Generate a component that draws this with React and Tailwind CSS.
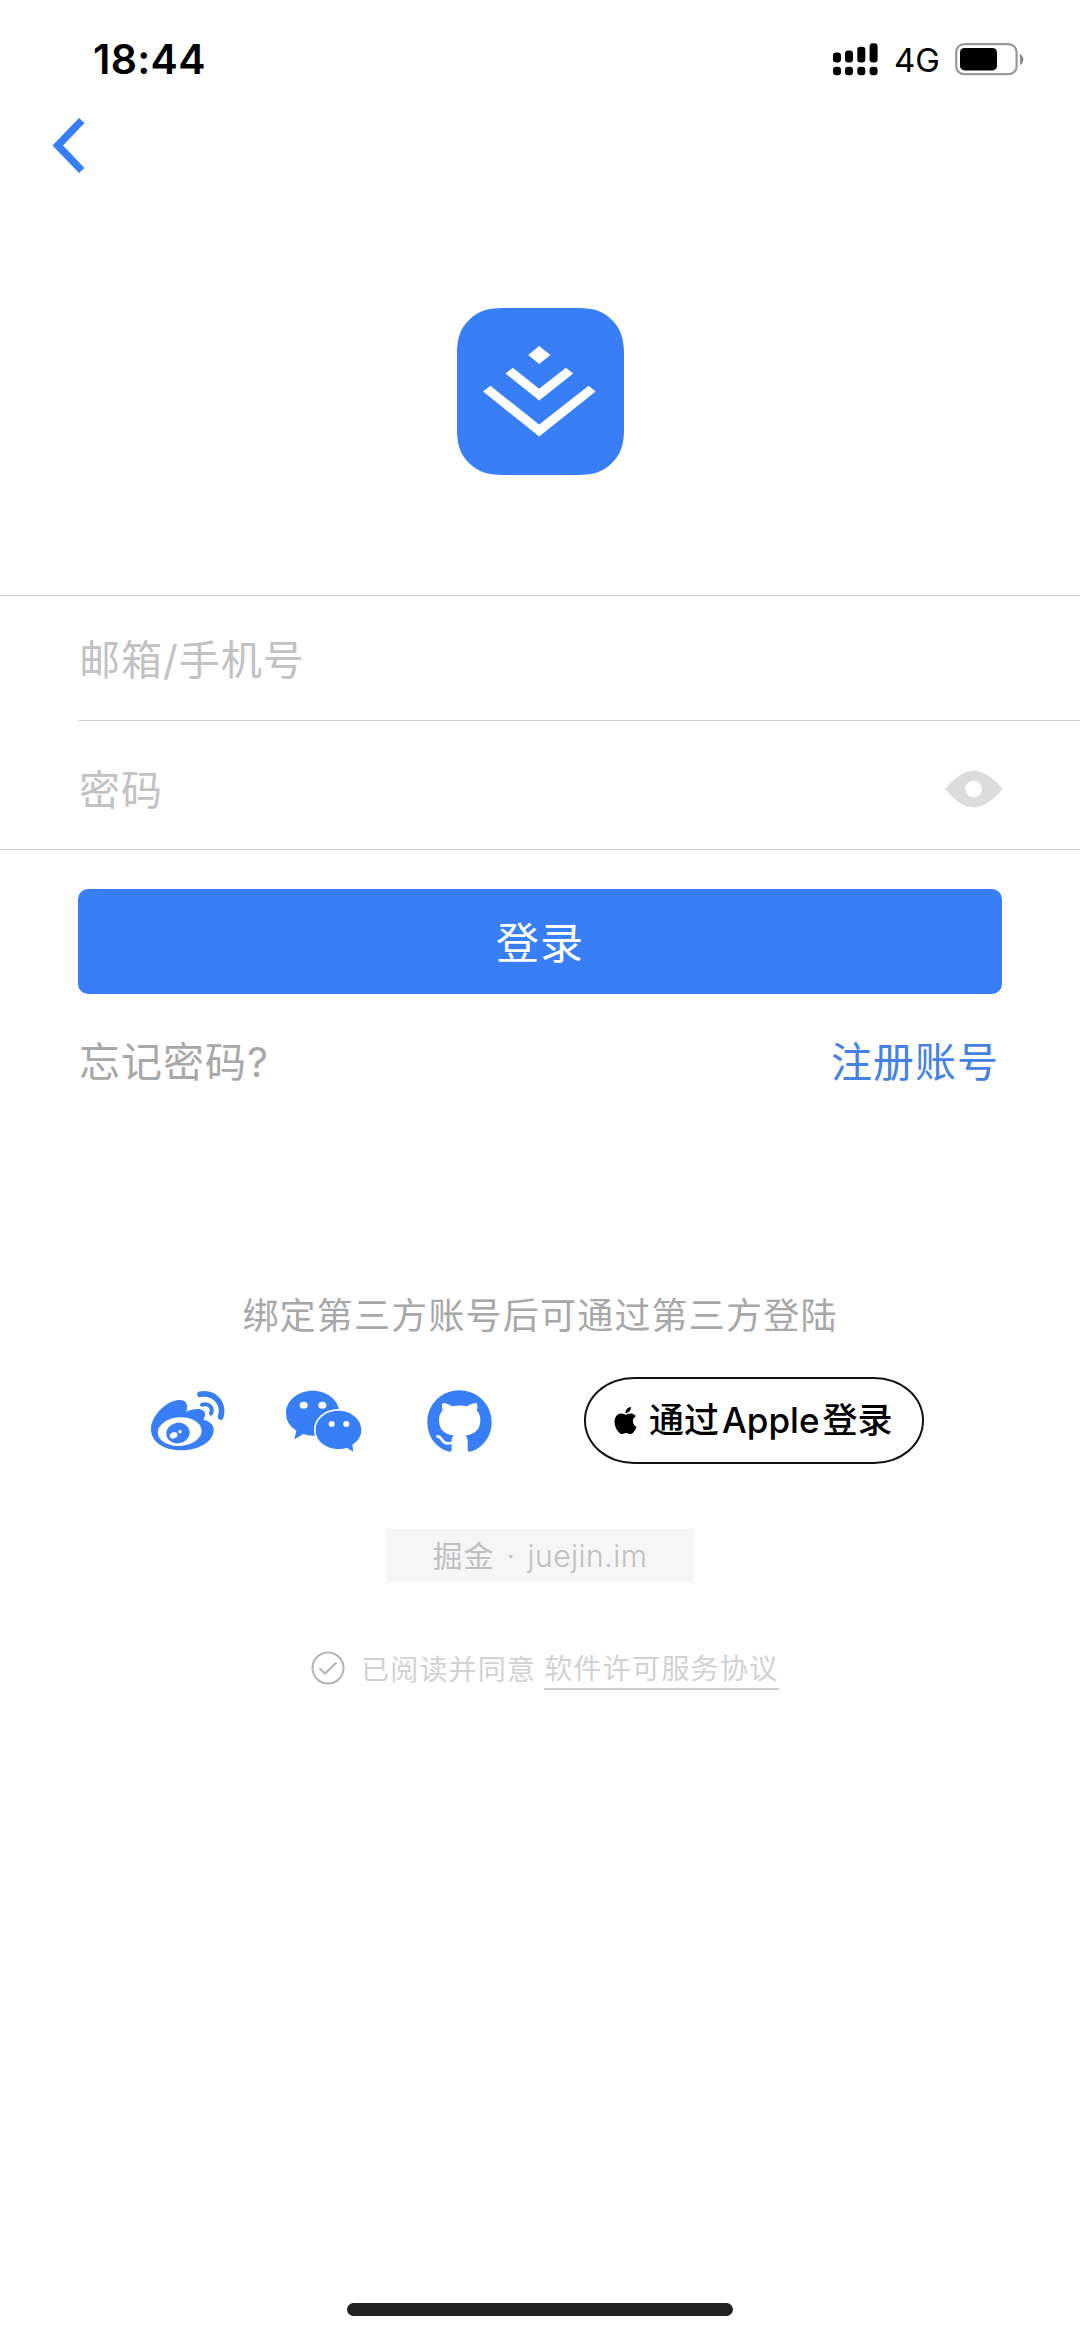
import React, { useState } from 'react';
import { SiApple } from 'react-icons/si';

function StatusBar() {
  return (
    <div className="flex h-[104px] items-center justify-between pl-[93px] pr-[56px] pt-[14px]">
      <span className="text-[41px] font-semibold leading-none tracking-[0.3px] text-black">18:44</span>
      <div className="flex items-center">
        <svg className="h-[33px] w-[45px]" viewBox="0 0 45 33" fill="#000">
          <rect x="0" y="9.5" width="8" height="10" rx="3.2" />
          <rect x="12" y="7.5" width="8" height="12" rx="3.2" />
          <rect x="24.3" y="3.7" width="8" height="15.8" rx="3.2" />
          <rect x="36.6" y="0.3" width="8" height="19.2" rx="3.2" />
          <rect x="0" y="23.7" width="8" height="8.6" rx="3.2" />
          <rect x="12" y="23.7" width="8" height="8.6" rx="3.2" />
          <rect x="24.3" y="23.7" width="8" height="8.6" rx="3.2" />
          <rect x="36.6" y="23.7" width="8" height="8.6" rx="3.2" />
        </svg>
        <span className="ml-[16px] w-[45px] pt-[2px] text-[33px] leading-none text-black">4G</span>
        <svg className="ml-[16px] h-[33px] w-[69px]" viewBox="0 0 69 33">
          <rect x="1.2" y="1.2" width="60.4" height="30" rx="8" fill="none" stroke="#999" strokeWidth="2.2" />
          <rect x="5" y="5" width="37" height="22.4" rx="4.5" fill="#000" />
          <path d="M65 11v11c2.200-1 3.300-3 3.300-5.500S67.200 12 65 11Z" fill="#888" />
        </svg>
      </div>
    </div>
  );
}

function Logo() {
  return (
    <svg className="h-[167px] w-[167px]" viewBox="0 0 500 500">
      <path
        d="M138 0H362C412 0 438 10 464 36C490 62 500 92 500 138V362C500 410 490 438 464 464C438 490 410 500 362 500H138C90 500 62 490 36 464C10 438 0 410 0 362V138C0 90 10 62 36 36C62 10 88 0 138 0Z"
        fill="#377ef7"
      />
      <g fill="#fff">
        <path d="M246 114 280 141 246 168 213 141Z" />
        <path d="M167 179 246 242 326 179 348 196 246 277 145 196Z" />
        <path d="M100 233 246 349 394 233 415 250 246 385 78 250Z" />
      </g>
    </svg>
  );
}

function EyeIcon() {
  return (
    <svg className="h-[38px] w-[58px]" viewBox="0 0 174 114">
      <path
        fillRule="evenodd"
        d="M1 57C30 20 60 2 86 2S142 20 173 57C142 94 112 112 86 112S30 94 1 57ZM86 32a25 25 0 1 0 0 50a25 25 0 1 0 0-50Z"
        fill="#dcdcdc"
      />
    </svg>
  );
}

function WeiboIcon() {
  return (
    <svg className="h-[62px] w-[76px]" viewBox="91 92 228 186">
      <path
        d="M94 210C94 168 142 122 180 122C200 122 206 136 200 157C224 145 256 145 256 165C256 172 253 177 251 181C272 186 282 197 282 211C282 246 238 273 182 273C130 273 94 246 94 210Z"
        fill="#377ef7"
      />
      <ellipse cx="180" cy="217" rx="66" ry="43" fill="#fff" transform="rotate(-4 180 217)" />
      <ellipse cx="175" cy="221" rx="35" ry="31" fill="#377ef7" transform="rotate(-12 175 221)" />
      <ellipse cx="162" cy="228" rx="12" ry="9" fill="#fff" transform="rotate(-25 162 228)" />
      <circle cx="181" cy="217" r="5" fill="#fff" />
      <g fill="none" stroke="#377ef7" strokeLinecap="round">
        <path d="M241 105C282 97 315 130 303 173" strokeWidth="17" />
        <path d="M247 136C268 130 281 144 274 163" strokeWidth="12" />
      </g>
    </svg>
  );
}

function WechatIcon() {
  return (
    <svg className="h-[62px] w-[78px]" viewBox="496 88 234 186">
      <path
        d="M579 90C535 90 499 119 499 157C499 180 511 198 530 210L524 236L551 220C560 223 570 225 580 225C624 225 659 194 659 157C659 119 623 90 579 90Z"
        fill="#377ef7"
      />
      <ellipse cx="552" cy="134" rx="12" ry="10.500" fill="#fff" />
      <ellipse cx="608" cy="134" rx="12" ry="10.500" fill="#fff" />
      <ellipse cx="656" cy="207" rx="73" ry="62" fill="#fff" />
      <path
        d="M656 150C618 150 588 176 588 208C588 240 618 265 656 265C665 265 673 264 681 261L701 273L698 252C715 242 725 226 725 208C725 176 694 150 656 150Z"
        fill="#377ef7"
      />
      <circle cx="636" cy="190" r="9" fill="#fff" />
      <circle cx="680" cy="190" r="9" fill="#fff" />
    </svg>
  );
}

function GithubIcon() {
  return (
    <svg className="h-[62px] w-[65px]" viewBox="921 88 195 186">
      <path
        d="M1018 89C964 89 922 132 922 185C922 226 946 260 983 272C990 274 995 273 995 267V238C995 231 998 227 1002 225C974 221 957 208 957 178C957 166 961 156 968 149C965 141 965 134 968 127C978 127 988 131 996 137C1010 134 1028 134 1041 137C1050 131 1060 127 1070 127C1073 134 1073 141 1070 149C1077 156 1081 166 1081 178C1081 208 1063 221 1036 225C1040 228 1043 234 1043 243V267C1043 273 1048 274 1055 272C1090 260 1115 226 1115 185C1115 132 1072 89 1018 89Z"
        fill="#377ef7"
      />
      <path d="M952 227C968 228 964 247 981 248C987 248 992 248 998 246" fill="none" stroke="#fff" strokeWidth="8" strokeLinecap="round" />
    </svg>
  );
}

export default function App() {
  const [agreed, setAgreed] = useState(true);

  return (
    <div className="flex h-[2337px] w-[1080px] flex-col overflow-hidden bg-white font-['Inter','Noto_Sans_CJK_SC',sans-serif]">
      <StatusBar />

      <div className="h-[84px] pl-[52px] pt-[13px]">
        <svg className="h-[56px] w-[33px]" viewBox="0 0 33 56">
          <path d="M27 1 32.500 6 11 28.500 32.500 51 27 56 0.500 28.500Z" fill="#377ef7" />
        </svg>
      </div>

      <div className="flex h-[407px] justify-center pt-[120px]">
        <Logo />
      </div>

      <div className="border-y border-[#cfcfd1]">
        <div className="flex h-[124px] items-center pl-[79px] pt-[4px]">
          <span className="text-[41px] leading-none tracking-[1px] text-[#c2c2c4]">邮箱/手机号</span>
        </div>
        <div className="ml-[78px] flex h-[129px] items-center justify-between border-t border-[#d4d4d6] pl-px pr-[77px] pt-[10px]">
          <span className="text-[41px] leading-none tracking-[1px] text-[#c2c2c4]">密码</span>
          <div className="pb-[2px]">
            <EyeIcon />
          </div>
        </div>
      </div>

      <div className="px-[78px] pt-[39px]">
        <button className="flex h-[105px] w-full items-center justify-center rounded-[10px] bg-[#377ef7] pt-[3px] text-[43px] leading-none tracking-[1px] text-white">
          登录
        </button>
        <div className="mt-[40px] flex h-[56px] items-center justify-between pl-px pr-[3px] text-[41px] leading-none tracking-[1px]">
          <span className="text-[#a8a8a8]">忘记密码?</span>
          <span className="text-[#4481e3]">注册账号</span>
        </div>
      </div>

      <p className="mt-[196px] h-[60px] text-center text-[36px] leading-[60px] tracking-[1.200px] text-[#a8a8a8]">
        绑定第三方账号后可通过第三方登陆
      </p>

      <div className="mt-[31px] flex h-[87px] items-center pl-[150px]">
        <WeiboIcon />
        <div className="ml-[59px]">
          <WechatIcon />
        </div>
        <div className="ml-[64px]">
          <GithubIcon />
        </div>
        <button className="ml-[92px] flex h-[87px] w-[340px] items-center rounded-[50px/43px] border-2 border-[#111] pl-[26px] text-black">
          <SiApple className="h-[27px] w-[27px]" />
          <span className="ml-[10px] whitespace-nowrap text-[35px] font-medium leading-none">
            通过<span className="mx-[3px]">Apple</span>登录
          </span>
        </button>
      </div>

      <div className="mt-[65px] flex justify-center">
        <div className="flex h-[53px] w-[308px] items-center justify-center bg-[#f6f6f6] pt-[2px] text-[30px] tracking-[0.5px] text-[#c0c0c0] [word-spacing:3px]">
          <span className="tracking-[1px]">掘金</span>
          <span className="whitespace-pre font-light"> · juejin.im</span>
        </div>
      </div>

      <div className="mt-[64px] flex h-[44px] items-center pl-[311px]">
        <svg className="h-[34px] w-[34px]" viewBox="0 0 34 34" fill="none" onClick={() => setAgreed(!agreed)}>
          <circle cx="17" cy="17" r="15.500" stroke="#b4b4b9" strokeWidth="2" />
          {agreed && <path d="M8.500 17.500 14 22.500 25.500 11.500" stroke="#b4b4b9" strokeWidth="2.200" />}
        </svg>
        <span className="ml-[16px] pt-[3px] text-[28px] leading-none tracking-[1.200px] text-[#d2d2d2]">已阅读并同意</span>
        <a className="ml-[8px] h-[44px] border-b-2 border-[#cdcdcd] text-[28px] leading-[46px] tracking-[1.300px] text-[#d2d2d2]">
          软件许可服务协议
        </a>
      </div>

      <div className="mt-auto mb-[21px] ml-[347px] h-[13px] w-[386px] rounded-full bg-[#222]" />
    </div>
  );
}
